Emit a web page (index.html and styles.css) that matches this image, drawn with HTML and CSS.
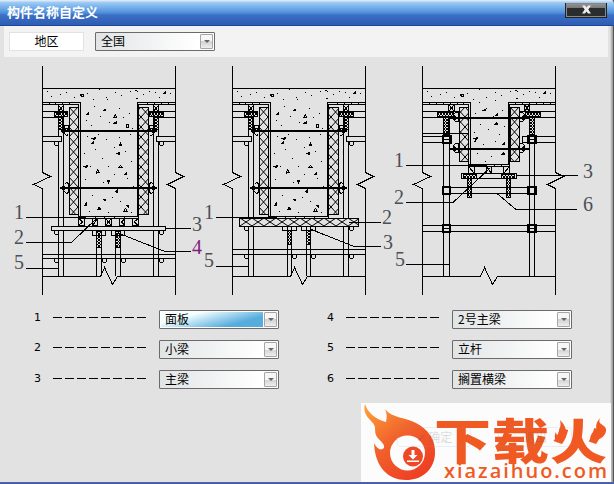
FILE: index.html
```html
<!DOCTYPE html>
<html lang="zh-CN">
<head>
<meta charset="utf-8">
<title>构件名称自定义</title>
<link rel="stylesheet" href="styles.css">
</head>
<body>
<div class="window">
  <div class="titlebar">
    <span class="title">构件名称自定义</span>
    <button class="close" aria-label="close"><svg width="11" height="9" viewBox="0 0 11 9"><path d="M1 .5h3l1.5 2 1.500-2h3L7.300 4.500 10 8.500H7L5.500 6.500 4 8.500H1l2.700-4z" fill="#eee"/></svg></button>
  </div>
  <div class="toolbar">
    <div class="region">地区</div>
    <div class="select"><span>全国</span><i></i></div>
  </div>

  <svg class="drawing" width="614" height="240" viewBox="0 60 614 240">
    <defs>
      <pattern id="cross" x="69" y="107" width="9" height="10" patternUnits="userSpaceOnUse">
        <path d="M0 0L9 10M9 0L0 10" stroke="#000" fill="none"/>
      </pattern>
      <pattern id="board" x="240" y="218" width="12" height="8" patternUnits="userSpaceOnUse">
        <path d="M0 0L12 8M12 0L0 8" stroke="#000" fill="none"/>
      </pattern>
      <pattern id="dense" width="3" height="3" patternUnits="userSpaceOnUse">
        <path d="M0 0h1v1H0zM1 1h1v1H1zM2 2h1v1H2zM2 0h1v1H2zM0 2h1v1H0z" fill="#000"/>
      </pattern>

      <!-- walls, slab line, broken bottom edge -->
      <g id="frame">
        <path d="M42.500 66V172.500L50.500 176.500L33.500 184.500L42.500 188.500V295M175.500 66V172.500L183.500 176.500L167.500 184.500L175.500 188.500V295"/>
        <path d="M42 88.500H176M42 276.500H100.500L104.500 267.500L112.500 284.500L117.500 276.500H176"/>
        <path class="dots" d="M47 91h1v1h-1zM51 96h1v1h-1zM60 94h1v1h-1zM66 92h1v1h-1zM74 97h1v1h-1zM87 93h1v1h-1zM93 99h1v1h-1zM99 89h1v1h-1zM106 97h1v1h-1zM115 92h1v1h-1zM121 95h1v1h-1zM130 91h1v1h-1zM143 94h1v1h-1zM149 91h1v1h-1zM155 92h1v1h-1zM159 97h1v1h-1zM170 93h1v1h-1z"/>
        <path d="M80.500 94.500h3v2h-2zM135.500 90.500l3 1M136 98.500h2M163.500 93.500l2-2v2z"/>
      </g>

      <!-- small ring clamp -->
      <path id="ring" d="M-1.500-1V1.500L-.5 2.500H1.500L2.500 1.500V-1"/>

      <!-- wide beam, its side panels and the upper tie -->
      <g id="wide">
        <path d="M42 102.500H80.500V216M42 104.500H78.500V218M176 102.500H137.500V216M176 104.500H138.500V218"/>
        <path d="M49.500 102v2M55.500 102v2M62.500 102v2M69.500 102v2M147.500 102v2M154.500 102v2M161.500 102v2M168.500 102v2"/>
        <rect x="69.500" y="107.500" width="9" height="107" fill="url(#cross)"/>
        <rect x="138.500" y="107.500" width="10" height="107" fill="url(#cross)"/>
        <path d="M42 111.500H68M42 117.500H58M149 111.500H176M159 117.500H176"/>
        <path d="M58.500 105V276M63.500 105V276M153.500 105V276M158.500 105V276"/>
        <path d="M58.500 105.500l5 6M63.500 105.500l-5 6M153.500 105.500l5 6M158.500 105.500l-5 6"/>
        <rect x="54.500" y="112.500" width="13" height="4" fill="url(#dense)"/>
        <rect x="149.500" y="112.500" width="14" height="4" fill="url(#dense)"/>
        <rect x="58.500" y="117.500" width="4" height="12" fill="url(#dense)"/>
        <rect x="154.500" y="117.500" width="4" height="12" fill="url(#dense)"/>
        <path class="bg" d="M43 136.500H61.500V141.500H43M175 136.500H156.500V141.500H175"/>
        <path d="M64.500 125.500h4v4l-2-1-2 1zM64.500 133.500l2 2 2-1M149.500 125.500h4v4l-2-1-2 1zM149.500 135.500h2l2-2"/>
        <path d="M64.500 184.500l2-2 2 1v9l-2 1-2-2M153.500 184.500l-2-2-2 1v9l2 1 2-2"/>
        <path class="rod" d="M61 131H157M60 188H157"/>
        <path class="nut" d="M59 131l3-1 1-2 2 1v4l-2 1-1-2zM158 131l-3-1-1-2-2 1v4l2 1 1-2zM59 188l3-1 1-2 2 1v4l-2 1-1-2zM158 188l-3-1-1-2-2 1v4l2 1 1-2z"/>
        <use href="#ring" x="56" y="143"/>
        <use href="#ring" x="161" y="143"/>
        <path class="dots" d="M107 99h1v1h-1zM94 106h1v1h-1zM119 108h1v1h-1zM100 116h1v1h-1zM129 113h1v1h-1zM86 120h1v1h-1zM91 125h1v1h-1zM123 117h1v1h-1zM109 122h1v1h-1zM132 128h1v1h-1zM98 134h1v1h-1zM106 139h1v1h-1zM119 137h1v1h-1zM130 134h1v1h-1zM87 136h1v1h-1zM95 149h1v1h-1zM114 147h1v1h-1zM125 151h1v1h-1zM84 153h1v1h-1zM102 158h1v1h-1zM131 161h1v1h-1zM90 166h1v1h-1zM108 166h1v1h-1zM114 174h1v1h-1zM96 173h1v1h-1zM127 178h1v1h-1zM85 179h1v1h-1zM103 182h1v1h-1zM133 186h1v1h-1zM92 195h1v1h-1zM112 197h1v1h-1zM120 201h1v1h-1zM98 207h1v1h-1zM89 211h1v1h-1zM131 212h1v1h-1zM108 212h1v1h-1z"/>
        <path d="M103.500 110.500l2-1v1zM86.500 114.500l2-2v2zM113.500 117.500l2-3 1 3zM113.500 123.500l3-2v2zM126.500 127.500v-3h2v3zM92.500 138.500l3-1-1 2zM91.500 143.500l2-2v2zM119.500 145.500l1-2 1 2zM117.500 153.500l2-1v2zM84.500 166.500l3-1-1 2zM96.500 172.500l1-3 2 3zM118.500 167.500l2-2 2 2zM124.500 174.500l2-2v2zM107.500 180.500l2 0-1 2zM84.500 205.500l2-3v3zM103.500 199.500h2v1zM115.500 191.500l2-2v3zM123.500 211.500l2-3 2 3zM126.500 205.500h2v2zM97.500 209.500l2-2 1 2z"/>
      </g>
    </defs>

    <g class="lines">
      <use href="#frame"/>
      <use href="#wide"/>
      <path d="M78 216.500H139M78 218.500H139M85.500 216v2M95.500 216v2M104.500 216v2M114.500 216v2M124.500 216v2"/>
      <path d="M78.500 218.500h6v7h-6zM92.500 218.500h5v7h-5zM105.500 218.500h6v7h-6zM119.500 218.500h5v7h-5zM132.500 218.500h6v7h-6z"/>
      <path d="M79 219l4 3-4 3M105.500 218.500l6 7M111.500 218.500l-6 7M92.500 225.500l5-7M124.500 219l-3 3 3 3M138 219l-4 3 4 3"/>
      <rect class="bg" x="51.500" y="226.500" width="114" height="4"/>
      <path d="M92.500 230.500h13v5h-13zM111.500 230.500h13v5h-13zM96.500 235V276M101.500 235V276M115.500 235V276M120.500 235V276"/>
      <path d="M96.500 231.500h5v4h-5zM115.500 231.500h5v4h-5z" fill="url(#dense)"/>
      <rect x="96.500" y="235.500" width="5" height="12" fill="url(#dense)"/>
      <rect x="115.500" y="235.500" width="5" height="12" fill="url(#dense)"/>
      <path d="M42 254.500H176M42 258.500H176"/>
      <use href="#ring" x="56" y="232"/><use href="#ring" x="161" y="232"/>
      <use href="#ring" x="56" y="260"/><use href="#ring" x="104" y="260"/>
      <use href="#ring" x="123" y="260"/><use href="#ring" x="161" y="260"/>
      <path d="M26 217.500H86M26 242.500H71.500L97 218M26 268.500H58M165 228.500H191M191 251.500H165L118 233"/>
    </g>

    <g class="lines">
      <use href="#frame" x="190"/>
      <use href="#wide" x="190"/>
      <path d="M269 216.500H328M276.500 216v2M285.500 216v2M295.500 216v2M304.500 216v2M314.500 216v2"/>
      <rect class="bg" x="239.500" y="218.500" width="119" height="8"/>
      <rect x="239.500" y="218.500" width="119" height="8" fill="url(#board)"/>
      <path d="M282.500 226.500h14v4h-14zM301.500 226.500h14v4h-14zM287.500 226V276M291.500 226V276M306.500 226V276M310.500 226V276"/>
      <rect x="287.500" y="230.500" width="4" height="14" fill="url(#dense)"/>
      <rect x="306.500" y="230.500" width="4" height="14" fill="url(#dense)"/>
      <path d="M232 249.500H366M232 254.500H366"/>
      <use href="#ring" x="246" y="228"/><use href="#ring" x="351" y="228"/>
      <use href="#ring" x="246" y="256"/><use href="#ring" x="294" y="256"/>
      <use href="#ring" x="313" y="256"/><use href="#ring" x="351" y="256"/>
      <path d="M216 217.500H276M216 266.500H249M349 222.500H381M381 246.500H354L310 229"/>
    </g>

    <g class="lines">
      <use href="#frame" x="380"/>
      <path d="M422 102.500H470.500V165M422 104.500H468.500V167M556 102.500H508.500V165M556 104.500H509.500V167"/>
      <path d="M429.500 102v2M436.500 102v2M443.500 102v2M450.500 102v2M457.500 102v2M463.500 102v2M515.500 102v2M522.500 102v2M529.500 102v2M536.500 102v2M543.500 102v2M550.500 102v2"/>
      <rect x="459.500" y="107.500" width="9" height="54" fill="url(#cross)"/>
      <rect x="510.500" y="107.500" width="9" height="54" fill="url(#cross)"/>
      <path d="M422 111.500H459M520 111.500H556M422 117.500H444M534 117.500H556M422 133.500H468M422 136.500H443M422 142.500H443M443 136.500H451M556 136.500H522.500V142.500H556"/>
      <path d="M448.500 104.500h6v7h-6zM448.500 104.500l6 7M454.500 104.500l-6 7M524.500 104.500h5v7h-5zM524.500 104.500l5 7M529.500 104.500l-5 7"/>
      <rect x="437.500" y="112.500" width="16" height="4" fill="url(#dense)"/>
      <rect x="525.500" y="112.500" width="15" height="4" fill="url(#dense)"/>
      <rect x="443.500" y="117.500" width="5" height="17" fill="url(#dense)"/>
      <rect x="529.500" y="117.500" width="5" height="17" fill="url(#dense)"/>
      <path d="M443.500 117V276M449.500 117V276M529.500 117V276M534.500 117V276"/>
      <path d="M455.500 112.500h3v9h-3l-2-2v-5zM522.500 112.500h-3v9h3l2-2v-5zM455.500 143.500h3v9h-3l-2-2v-5zM522.500 143.500h-3v9h3l2-2v-5z"/>
      <path class="rod" d="M450 118H529M450 149H529"/>
      <path class="nut" d="M450 118l3-1 1-2 2 1v4l-2 1-1-2zM528 118l-3-1-1-2-2 1v4l2 1 1-2zM450 149l3-1 1-2 2 1v4l-2 1-1-2zM528 149l-3-1-1-2-2 1v4l2 1 1-2z"/>
      <path d="M468 164.500H510M468 166.500H510M474.500 164v2M480.500 164v2M486.500 164v2M494.500 164v2M501.500 164v2"/>
      <path d="M468.500 166.500h6v7h-6zM486.500 166.500h5v7h-5zM503.500 166.500h6v7h-6zM468.500 166.500l6 7M486.500 166.500l5 7M509.500 166.500l-6 7"/>
      <rect x="461.500" y="173.500" width="55" height="5"/>
      <rect x="463.500" y="174.500" width="13" height="4" fill="url(#dense)"/>
      <rect x="501.500" y="174.500" width="13" height="4" fill="url(#dense)"/>
      <path d="M443 187.500H536M443 193.500H536M422 225.500H556M422 231.500H556"/>
      <rect x="467.500" y="178.500" width="4" height="19" fill="url(#dense)"/>
      <rect x="506.500" y="178.500" width="4" height="19" fill="url(#dense)"/>
      <path class="clamp" d="M443 136h8v7h-8zM528 136h8v7h-8zM443 187h7v7h-7zM528 187h8v7h-8zM443 225h7v7h-7zM528 225h8v7h-8z"/>
      <path d="M443 139.500h7M528 139.500h8M443 228.500h7M528 228.500h8"/>
      <path class="dots" d="M479 102h1v1h-1zM495 100h1v1h-1zM486 108h1v1h-1zM502 110h1v1h-1zM475 113h1v1h-1zM493 116h1v1h-1zM480 124h1v1h-1zM504 126h1v1h-1zM488 129h1v1h-1zM474 132h1v1h-1zM499 134h1v1h-1zM483 144h1v1h-1zM495 141h1v1h-1zM477 153h1v1h-1zM491 156h1v1h-1zM504 153h1v1h-1zM485 161h1v1h-1z"/>
      <path d="M482.500 110.500l3-1v1zM495.500 115.500l2-2v2zM494.500 124.500l2-2 1 2zM474.500 138.500l3-1-1 2zM502.500 144.500l2-2v2zM473.500 141.500h2v-2M501.500 154.500l2-2 1 2z"/>
      <path d="M406 165.500H486M406 202.500H453L490 168M517 175.500H578M577 209.500H516L497 193.500M406 264.500H450"/>
    </g>

    <g class="marks">
      <text x="14" y="219">1</text>
      <text x="14" y="244">2</text>
      <text x="14" y="269">5</text>
      <text x="192" y="231">3</text>
      <text class="purple" x="192" y="254">4</text>
      <text x="204" y="219">1</text>
      <text x="204" y="267">5</text>
      <text x="382" y="224">2</text>
      <text x="383" y="249">3</text>
      <text x="394" y="167">1</text>
      <text x="394" y="204">2</text>
      <text x="395" y="266">5</text>
      <text x="583" y="178">3</text>
      <text x="583" y="211">6</text>
    </g>
  </svg>

  <div class="fields">
    <div class="field"><label>1</label><b></b><div class="select active"><span>面板</span><i></i></div></div>
    <div class="field"><label>4</label><b></b><div class="select"><span>2号主梁</span><i></i></div></div>
    <div class="field"><label>2</label><b></b><div class="select"><span>小梁</span><i></i></div></div>
    <div class="field"><label>5</label><b></b><div class="select"><span>立杆</span><i></i></div></div>
    <div class="field low"><label>3</label><b></b><div class="select"><span>主梁</span><i></i></div></div>
    <div class="field low"><label>6</label><b></b><div class="select"><span>搁置横梁</span><i></i></div></div>
  </div>

  <div class="watermark">
    <svg width="250" height="79" viewBox="0 0 250 79">
      <defs>
        <linearGradient id="fire" x1="0" y1="0" x2=".7" y2="1">
          <stop offset="0" stop-color="#fba63c"/>
          <stop offset=".5" stop-color="#f2622b"/>
          <stop offset="1" stop-color="#ee3f24"/>
        </linearGradient>
      </defs>
      <path d="M4 1C7 10 14 16 25 19C26 15 26 10 24 6C31 15 43 14 55 20C67 26 75 37 74 51C73 67 61 77 45 77C28 77 14 65 13 40C16 46 20 48 23 45C24 41 20 39 16 34C12 28 17 24 10 18C5 13 2 8 4 1Z" fill="url(#fire)"/>
      <circle cx="46.500" cy="50" r="17.500" fill="#fcfcfc"/>
      <circle cx="52" cy="53.500" r="10" fill="#ee4826"/>
      <path d="M50.500 47h3v5h3L52 56.500 47.500 52h3zM46 57.500h12v1.500H46z" fill="#fff"/>
      <g fill="#f05a22">
        <path d="M199 17C202 20 205 24 205 29C205 35 202 38 198 38C193 38 193 32 195 29C195 32 197 33 198 32C197 26 201 24 199 17Z"/>
        <path d="M239 15C236 22 244 21 245 26C246 31 240 38 230 38C228 34 231 29 234 28C233 31 235 32 236 30C235 24 234 21 239 15Z"/>
        <text class="brand" transform="translate(73 56) scale(1 .84)" textLength="173">下载火</text>
        <text class="site" x="83" y="75" textLength="163">xiazaihuo.com</text>
      </g>
    </svg>
    <div class="ghost ok">✔ 确定</div>
    <div class="ghost exit">退出</div>
  </div>
</div>
</body>
</html>
```

FILE: styles.css
```css
body {
  margin: 0;
  background: #2c5fe0;
}

.window {
  position: relative;
  box-sizing: border-box;
  width: 614px;
  height: 483px;
  overflow: hidden;
  background: linear-gradient(to left, #555 1px, #999 1px, #aaa 2px, #c4c4c4 3px, #e2e2e2 4px);
  border-bottom: 1px solid #666;
  font: 12px/17px "Noto Sans CJK SC", sans-serif;
  color: #000;
}

.titlebar {
  display: flex;
  justify-content: space-between;
  box-sizing: border-box;
  height: 26px;
  padding: 3px 7px 0 7px;
  border-bottom: 1px solid #1646a0;
  border-radius: 0 4px 0 0;
  background: linear-gradient(#d9e8fb 0 1px, #a4cdf3 2px, #78b2eb 7px, #4e8edb 13px, #3b6fc6 15px, #2f5cb2 25px);
}

.title {
  color: #fff;
  font-size: 13px;
  font-weight: bold;
  line-height: 18px;
}

.close {
  box-sizing: border-box;
  width: 42px;
  height: 15px;
  padding: 0;
  border: 1px solid #222;
  border-top: 0;
  background: linear-gradient(#999 0, #777 5px, #2a2d2d 5px);
  box-shadow: inset 0 0 0 1px #888;
  line-height: 10px;
}

.toolbar {
  display: flex;
  gap: 11px;
  box-sizing: border-box;
  height: 31px;
  margin: 0 6px 0 4px;
  padding: 6px 5px;
  background: #f3f3f3;
}

.region {
  box-sizing: border-box;
  width: 75px;
  height: 19px;
  border: 1px solid #e2e2e2;
  background: #fff;
  line-height: 16px;
  text-align: center;
}

.select {
  display: flex;
  justify-content: space-between;
  box-sizing: border-box;
  width: 120px;
  height: 19px;
  padding: 1px 1px 1px 5px;
  border: 1px solid #6c6a6c;
  border-radius: 1px;
  background: linear-gradient(to right, #e1e4e5, #fff 85%);
}

.select span {
  line-height: 14px;
}

.select i {
  display: flex;
  align-items: center;
  justify-content: center;
  box-sizing: border-box;
  width: 13px;
  height: 15px;
  border: 1px solid #a5a5a5;
  border-radius: 1px;
  background: linear-gradient(#f6f6f6 50%, #d2d2d2 50%, #eee);
}

.select i::after {
  content: "";
  border: 3px solid transparent;
  border-top-color: #666;
  border-bottom: 0;
}

.active {
  background: linear-gradient(to right, transparent 103px, #fff 103px), linear-gradient(165deg, #f4ffff 25%, #56addd 68%);
  box-shadow: inset 0 0 0 1px #fff;
}

.drawing {
  display: block;
  margin-top: 3px;
}

.lines {
  fill: none;
  stroke: #000;
  stroke-width: 1;
  shape-rendering: crispEdges;
}

.bg {
  fill: #e2e2e2;
}

.rod {
  stroke-width: 2;
}

.clamp {
  stroke-width: 2;
}

.dots, .nut {
  fill: #000;
  stroke: none;
}

.marks {
  font: 20px "Liberation Serif", serif;
  fill: #4c5054;
}

.purple {
  fill: #80207c;
}

.fields {
  display: grid;
  grid-template-columns: 293px 245px;
  row-gap: 11px;
  margin: 10px 0 0 34px;
}

.field {
  display: flex;
  height: 19px;
}

.field label {
  width: 19px;
  font: 11px/16px "DejaVu Sans", sans-serif;
}

.field b {
  width: 93px;
  height: 1px;
  margin: 7px 13px 0 0;
  background: repeating-linear-gradient(to right, #000 0 9px, transparent 9px 12px);
}

.low label {
  line-height: 18px;
}

.low b {
  margin-top: 8px;
}

/* download site badge, lies over the two buttons */
.watermark {
  position: absolute;
  left: 361px;
  top: 403px;
  width: 250px;
  height: 79px;
  background: #fcfcfc;
}

.watermark svg {
  display: block;
}

.ghost {
  position: absolute;
  top: 24px;
  box-sizing: border-box;
  width: 74px;
  height: 20px;
  border: 1px solid rgba(120, 160, 190, .15);
  border-radius: 3px;
  color: rgba(90, 90, 90, .22);
  text-align: center;
}

.ok {
  left: 36px;
}

.exit {
  left: 137px;
}

.brand {
  font: 900 57px "Noto Sans CJK SC", sans-serif;
}

.site {
  font: 600 20px "Open Sans", sans-serif;
}
```
